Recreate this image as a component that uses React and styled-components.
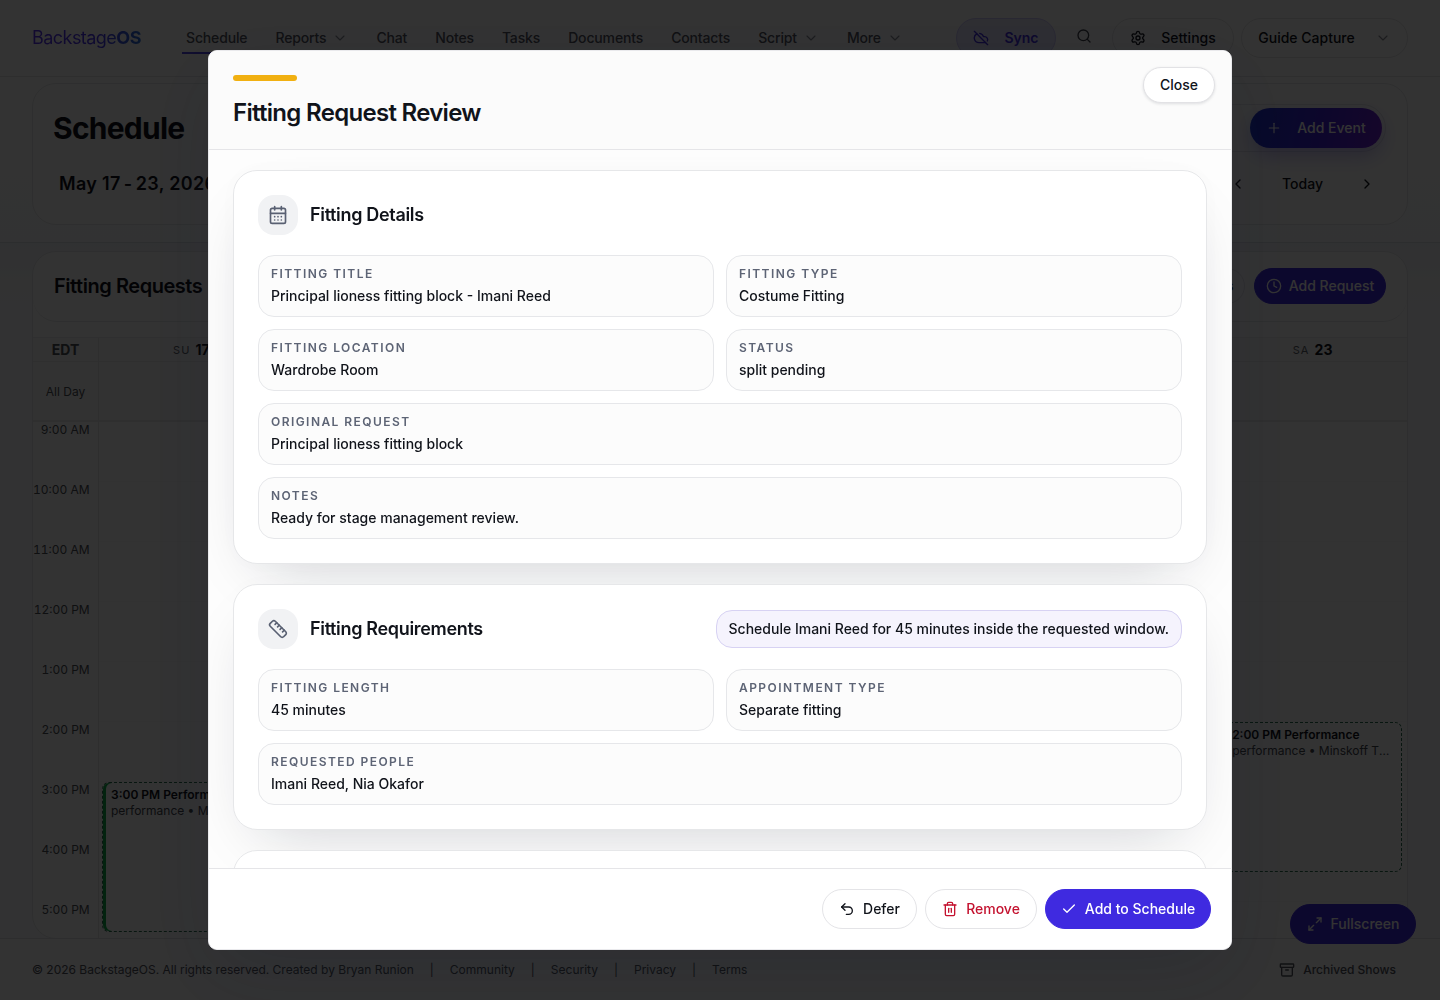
import React from 'react';
import styled, { createGlobalStyle, css } from 'styled-components';
import {
  CalendarDays, Ruler, Undo2, Trash2, Check, ChevronDown, ChevronLeft, ChevronRight,
  CloudOff, Search, Settings, Plus, Clock, Maximize2, Archive,
} from 'lucide-react';

const Global = createGlobalStyle`
  *, *::before, *::after { box-sizing: border-box; }
  html, body { margin: 0; height: 100%; overflow: hidden; }
  body { font-family: Inter, "Liberation Sans", sans-serif; color: #10131a; background: #fbfbfc; font-size: 14px; line-height: 20px; }
  button { font: inherit; color: inherit; margin: 0; }
  h1, h2, h3, p { margin: 0; }
`;

const Page = styled.div`
  height: 1000px;
  width: 1440px;
  display: flex;
  flex-direction: column;
  background: linear-gradient(180deg, #fff 0, #fff 76px, #fafbfc 240px, #fbfbfc 100%);
`;

/* top bar */
const TopBar = styled.header`
  height: 77px;
  flex: none;
  display: flex;
  align-items: center;
  padding: 0 32px;
  border-bottom: 1px solid #e4e4e7;
`;
const Logo = styled.div`
  width: 154px;
  font-size: 18px;
  letter-spacing: -0.54px;
  line-height: 28px;
  span {
    background: linear-gradient(90deg, #5a35f0, #4a35ee 60%, #2b6fd8);
    background-clip: text;
    color: transparent;
  }
  b { font-weight: 700; }
`;
const Nav = styled.nav`
  display: flex;
  gap: 20px;
  margin-left: -4px;
  flex: 1;
`;
const NavItem = styled.a`
  display: flex;
  align-items: center;
  gap: 6px;
  height: 32px;
  padding: 0 4px;
  font-weight: 500;
  letter-spacing: -0.15px;
  color: #52555e;
  border-bottom: 2px solid ${(p) => (p.$active ? '#4f46e5' : 'transparent')};
  border-top: 2px solid transparent;
  svg { color: #8b8e96; }
`;
const TopActions = styled.div`
  display: flex;
  align-items: center;
`;
const Pill = styled.button`
  display: flex;
  align-items: center;
  justify-content: center;
  height: ${(p) => p.$h || 40}px;
  width: ${(p) => p.$w}px;
  gap: ${(p) => p.$gap ?? 15}px;
  padding: 0;
  border-radius: 999px;
  border: 1px solid #e4e4e7;
  background: #fff;
  font-weight: 500;
  white-space: nowrap;
  ${(p) => p.$tone === 'sync' && css`
    background: #e5e3fb; border-color: #cdc8f8; color: #4230e0; font-weight: 600;
  `}
  ${(p) => p.$tone === 'primary' && css`
    background: #3f2ae0; border-color: #3f2ae0; color: #fff;
  `}
  ${(p) => p.$tone === 'gradient' && css`
    background: linear-gradient(100deg, #1d35cf, #4020d8 55%, #6d1fd0); border: 0; color: #fff;
    box-shadow: 0 8px 20px rgba(64, 41, 223, 0.3);
  `}
  ${(p) => p.$tone === 'danger' && css`color: #c4122f;`}
`;
const AccountPill = styled(Pill)`
  margin-left: 7px;
`;
const SearchSlot = styled.div`
  width: 56px;
  display: flex;
  justify-content: center;
  color: #3f424a;
  padding-bottom: 4px;
`;

/* schedule heading */
const ScheduleCard = styled.section`
  margin: 6px 32px 0;
  height: 142px;
  flex: none;
  border: 1px solid #e6e7ea;
  border-radius: 24px;
  background: #fff;
  display: flex;
  flex-direction: column;
  padding: 20px 20px 0;
`;
const CardRow = styled.div`
  display: flex;
  align-items: center;
  justify-content: space-between;
`;
const PageTitle = styled.h1`
  font-size: 30px;
  font-weight: 700;
  letter-spacing: -0.75px;
  line-height: 48px;
`;
const ActionTray = styled.div`
  border: 1px solid #e8e8ec;
  border-radius: 999px;
  padding: 3px;
  padding-left: 340px;
  margin-right: 1px;
`;
const RangeRow = styled(CardRow)`
  height: 64px;
  padding: 0 12px 0 6px;
`;
const Range = styled.h2`
  font-size: 18px;
  line-height: 28px;
  font-weight: 600;
  letter-spacing: 0.3px;
`;
const Stepper = styled.div`
  display: flex;
  align-items: center;
  justify-content: space-between;
  width: 145px;
  font-weight: 500;
`;

/* calendar */
const Band = styled.main`
  margin-top: 17px;
  height: 696px;
  flex: none;
  border-top: 1px solid #dcdfe6;
  padding: 8px 32px 0;
  background: linear-gradient(180deg, #f1f3f8, #fbfbfc 60px);
`;
const CalendarShell = styled.section`
  height: 688px;
  border: 1px solid #e6e7ea;
  border-radius: 24px;
  overflow: hidden;
  background: #fff;
`;
const RequestsBar = styled.div`
  height: 70px;
  border-bottom: 1px solid #e6e7ea;
  border-radius: 0 0 24px 24px;
  padding: 0 21px 1px;
  display: flex;
  align-items: center;
  justify-content: space-between;
`;
const RequestsTitle = styled.h2`
  font-size: 20px;
  line-height: 28px;
  font-weight: 600;
  letter-spacing: -0.45px;
`;
const RequestActions = styled.div`
  display: flex;
  gap: 9px;
`;
const Grid = styled.div`
  display: grid;
  grid-template-columns: 66px repeat(7, minmax(0, 1fr));
  grid-template-rows: 25px 60px 516px;
  margin-top: 15px;
`;
const HeadCell = styled.div`
  display: flex;
  align-items: center;
  justify-content: center;
  gap: 5px;
  padding-right: 2px;
  border-top: 1px solid #ececef;
  border-bottom: 1px solid #e8e8eb;
  background: #fafafa;
  small { font-size: 11px; letter-spacing: 1.1px; color: #5d6068; }
  b { font-weight: 700; }
`;
const ZoneCell = styled(HeadCell)`
  padding-right: 0;
  border-right: 1px solid #e3e3e7;
  font-weight: 700;
  color: #4c4f57;
`;
const AllDay = styled.div`
  display: flex;
  align-items: center;
  justify-content: center;
  padding-top: 2px;
  border-bottom: 2px solid #e8e8eb;
  border-right: ${(p) => (p.$label ? '1px solid #e3e3e7' : '0')};
  background: #fafafa;
  font-size: 12px;
  color: #4c4f57;
`;
const Times = styled.div`
  display: grid;
  grid-auto-rows: 60px;
  border-right: 1px solid #e3e3e7;
  text-align: right;
  padding-right: 10px;
  font-size: 12px;
  line-height: 16px;
  font-variant-numeric: tabular-nums;
  color: #4c4f57;
  white-space: nowrap;
`;
const DayColumn = styled.div`
  padding: 0 5px 0 3px;
  background: repeating-linear-gradient(180deg, transparent 0 59px, #f9f9fa 59px 60px);
`;
const Event = styled.article`
  margin-top: ${(p) => p.$start}px;
  height: 150px;
  border: 1px dashed #2c6f50;
  border-radius: 7px;
  box-shadow: inset 3px 0 0 #0fb14a;
  padding: 4px 9px 0 8px;
  background: #fdfefe;
  font-size: 12px;
  line-height: 16px;
  color: #43464e;
  p { overflow: hidden; white-space: nowrap; text-overflow: ellipsis; }
  h3 { font-size: 12px; font-weight: 600; color: #10131a; white-space: nowrap; }
`;
const Footer = styled.footer`
  flex: 1;
  border-top: 1px solid #dfe0e4;
  padding: 0 44px 0 32px;
  display: flex;
  align-items: center;
  background: #fcfcfd;
  font-size: 12px;
  color: #50535b;
`;
const FooterLink = styled.a`
  display: flex;
  &::before { content: '|'; width: 36px; text-align: center; }
`;
const ArchiveLink = styled.a`
  margin-left: auto;
  display: flex;
  align-items: center;
  gap: 8px;
  font-weight: 500;
`;
const Floating = styled.div`
  position: fixed;
  right: 24px;
  bottom: 56px;
`;

/* dialog */
const Overlay = styled.div`
  position: fixed;
  inset: 0;
  background: rgba(0, 0, 0, 0.8);
  display: flex;
  align-items: center;
  justify-content: center;
`;
const Dialog = styled.div`
  width: 1024px;
  height: 900px;
  border: 1px solid #e9e9ec;
  border-radius: 9px;
  overflow: hidden;
  background: #fff;
  display: flex;
  flex-direction: column;
  box-shadow: 0 24px 80px rgba(15, 23, 42, 0.18);
`;
const DialogHead = styled.header`
  height: 99px;
  flex: none;
  display: flex;
  justify-content: space-between;
  padding: 16px 16px 0 24px;
  border-bottom: 1px solid #e5e5e8;
  background: #fbfbfb;
`;
const Accent = styled.div`
  width: 64px;
  height: 6px;
  margin: 8px 0 16px;
  border-radius: 3px;
  background: #f1b011;
`;
const DialogTitle = styled.h2`
  font-size: 24px;
  line-height: 32px;
  font-weight: 600;
  letter-spacing: -0.7px;
`;
const CloseButton = styled(Pill)`
  border-color: #e2e2e5;
  box-shadow: 0 1px 3px rgba(15, 23, 42, 0.12);
`;
const DialogBody = styled.div`
  flex: 1;
  min-height: 0;
  overflow: hidden;
  padding: 20px 24px 0;
  display: flex;
  flex-direction: column;
  gap: 20px;
  background: #fdfdfd;
`;
const Card = styled.section`
  flex: none;
  padding: 24px;
  border: 1px solid #e6e7e9;
  border-radius: 24px;
  background: #fff;
  box-shadow: 0 24px 60px -28px rgba(15, 23, 42, 0.22), 0 0 24px rgba(15, 23, 42, 0.015);
`;
const CardHead = styled.div`
  display: flex;
  align-items: center;
  gap: 12px;
  height: 40px;
  margin-bottom: 20px;
`;
const IconTile = styled.span`
  width: 40px;
  height: 40px;
  border-radius: 16px;
  display: grid;
  place-items: center;
  background: #f1f2f4;
  color: #596072;
`;
const CardTitle = styled.h3`
  font-size: 18px;
  line-height: 28px;
  font-weight: 600;
  letter-spacing: -0.33px;
`;
const Notice = styled.p`
  margin-left: auto;
  height: 38px;
  padding: 0 12px;
  display: flex;
  align-items: center;
  border: 1px solid #d7d2f3;
  border-radius: 16px;
  background: #f5f3fd;
  font-weight: 500;
`;
const Fields = styled.div`
  display: grid;
  grid-template-columns: 1fr 1fr;
  gap: 12px;
`;
const FieldBox = styled.div`
  grid-column: ${(p) => (p.$wide ? '1 / -1' : 'auto')};
  height: 62px;
  padding: 10px 12px;
  border: 1px solid #e6e7ea;
  border-radius: 16px;
  background: #fcfcfc;
`;
const Label = styled.div`
  font-size: 12px;
  line-height: 16px;
  font-weight: 600;
  letter-spacing: 1.44px;
  text-transform: uppercase;
  color: #5d6475;
`;
const Value = styled.div`
  margin-top: 4px;
  line-height: 20px;
  font-weight: 500;
`;
const DialogFoot = styled.footer`
  height: 81px;
  flex: none;
  display: flex;
  align-items: center;
  justify-content: flex-end;
  gap: 8px;
  padding: 0 20px;
  border-top: 1px solid #e5e5e8;
  background: #fff;
`;

const navItems = [
  ['Schedule'], ['Reports', true], ['Chat'], ['Notes'], ['Tasks'],
  ['Documents'], ['Contacts'], ['Script', true], ['More', true],
];
const days = [['SU', 17], ['MO', 18], ['TU', 19], ['WE', 20], ['TH', 21], ['FR', 22], ['SA', 23]];
const hours = ['9:00 AM', '10:00 AM', '11:00 AM', '12:00 PM', '1:00 PM', '2:00 PM', '3:00 PM', '4:00 PM', '5:00 PM'];
const events = {
  17: { start: 360, title: '3:00 PM Performance' },
  23: { start: 300, title: '2:00 PM Performance' },
};
const details = [
  ['Fitting title', 'Principal lioness fitting block - Imani Reed'],
  ['Fitting type', 'Costume Fitting'],
  ['Fitting location', 'Wardrobe Room'],
  ['Status', 'split pending'],
  ['Original request', 'Principal lioness fitting block', true],
  ['Notes', 'Ready for stage management review.', true],
];
const requirements = [
  ['Fitting length', '45 minutes'],
  ['Appointment type', 'Separate fitting'],
  ['Requested people', 'Imani Reed, Nia Okafor', true],
];

function FieldList({ items }) {
  return (
    <Fields>
      {items.map(([label, value, wide]) => (
        <FieldBox key={label} $wide={wide}>
          <Label>{label}</Label>
          <Value>{value}</Value>
        </FieldBox>
      ))}
    </Fields>
  );
}

function Background() {
  return (
    <Page>
      <TopBar>
        <Logo><span>Backstage<b>OS</b></span></Logo>
        <Nav>
          {navItems.map(([name, menu], i) => (
            <NavItem key={name} $active={i === 0}>
              {name}
              {menu && <ChevronDown size={16} strokeWidth={1.75} />}
            </NavItem>
          ))}
        </Nav>
        <TopActions>
          <Pill $w={100} $tone="sync"><CloudOff size={16} />Sync</Pill>
          <SearchSlot><Search size={16} /></SearchSlot>
          <Pill $w={122}><Settings size={16} />Settings</Pill>
          <AccountPill $w={167} $gap={20}>Guide Capture<ChevronDown size={16} strokeWidth={1.75} color="#8b8e96" /></AccountPill>
        </TopActions>
      </TopBar>
      <ScheduleCard>
        <CardRow>
          <PageTitle>Schedule</PageTitle>
          <ActionTray><Pill $w={132} $tone="gradient"><Plus size={16} strokeWidth={1.75} />Add Event</Pill></ActionTray>
        </CardRow>
        <RangeRow>
          <Range>May 17{'\u2009'}-{'\u2009'}23, 2026</Range>
          <Stepper><ChevronLeft size={16} /><span>Today</span><ChevronRight size={16} /></Stepper>
        </RangeRow>
      </ScheduleCard>
      <Band>
        <CalendarShell>
          <RequestsBar>
            <RequestsTitle>Fitting Requests</RequestsTitle>
            <RequestActions>
              <Pill $w={122} $h={36}>View Requests</Pill>
              <Pill $w={132} $h={36} $gap={7} $tone="primary"><Clock size={16} />Add Request</Pill>
            </RequestActions>
          </RequestsBar>
          <Grid>
            <ZoneCell>EDT</ZoneCell>
            {days.map(([d, n]) => <HeadCell key={n}><small>{d}</small><b>{n}</b></HeadCell>)}
            <AllDay $label>All Day</AllDay>
            {days.map(([, n]) => <AllDay key={n} />)}
            <Times>{hours.map((h) => <span key={h}>{h}</span>)}</Times>
            {days.map(([, n]) => (
              <DayColumn key={n}>
                {events[n] && (
                  <Event $start={events[n].start}>
                    <h3>{events[n].title}</h3>
                    <p>performance • Minskoff Theatre</p>
                  </Event>
                )}
              </DayColumn>
            ))}
          </Grid>
        </CalendarShell>
      </Band>
      <Footer>
        © 2026 BackstageOS. All rights reserved. Created by Bryan Runion
        {['Community', 'Security', 'Privacy', 'Terms'].map((t) => <FooterLink key={t}>{t}</FooterLink>)}
        <ArchiveLink><Archive size={16} />Archived Shows</ArchiveLink>
      </Footer>
      <Floating>
        <Pill $w={126} $gap={8} $tone="primary"><Maximize2 size={16} />Fullscreen</Pill>
      </Floating>
    </Page>
  );
}

export default function App() {
  return (
    <>
      <Global />
      <Background />
      <Overlay>
        <Dialog>
          <DialogHead>
            <div>
              <Accent />
              <DialogTitle>Fitting Request Review</DialogTitle>
            </div>
            <CloseButton $w={72} $h={36}>Close</CloseButton>
          </DialogHead>
          <DialogBody>
            <Card>
              <CardHead>
                <IconTile><CalendarDays size={20} /></IconTile>
                <CardTitle>Fitting Details</CardTitle>
              </CardHead>
              <FieldList items={details} />
            </Card>
            <Card>
              <CardHead>
                <IconTile><Ruler size={20} /></IconTile>
                <CardTitle>Fitting Requirements</CardTitle>
                <Notice>Schedule Imani Reed for 45 minutes inside the requested window.</Notice>
              </CardHead>
              <FieldList items={requirements} />
            </Card>
            <Card />
          </DialogBody>
          <DialogFoot>
            <Pill $w={95} $gap={8}><Undo2 size={16} />Defer</Pill>
            <Pill $w={112} $gap={8} $tone="danger"><Trash2 size={16} />Remove</Pill>
            <Pill $w={166} $gap={8} $tone="primary"><Check size={16} />Add to Schedule</Pill>
          </DialogFoot>
        </Dialog>
      </Overlay>
    </>
  );
}
